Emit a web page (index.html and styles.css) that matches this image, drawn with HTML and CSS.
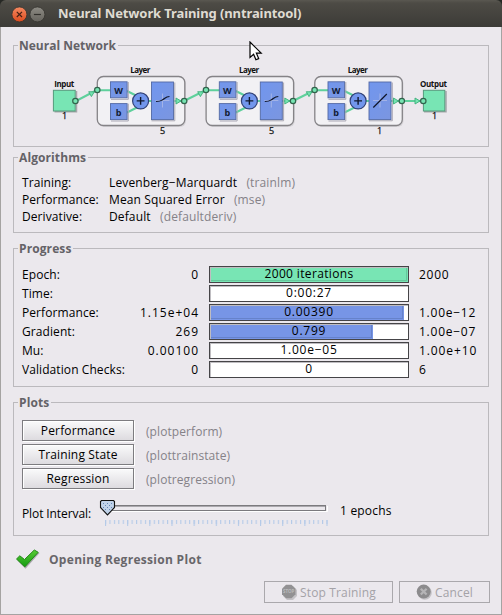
FILE: index.html
```html
<!DOCTYPE html>
<html lang="en">
<head>
<meta charset="utf-8">
<title>Neural Network Training (nntraintool)</title>
<link rel="stylesheet" href="styles.css">
</head>
<body>
<div class="window">
  <header class="titlebar">
    <svg class="controls" width="36" height="20" viewBox="0 0 36 20">
      <defs>
        <linearGradient id="cl" x1="0" y1="0" x2="0" y2="1"><stop offset="0" stop-color="#f58a62"/><stop offset="1" stop-color="#dd4b1e"/></linearGradient>
        <linearGradient id="mn" x1="0" y1="0" x2="0" y2="1"><stop offset="0" stop-color="#8d8b84"/><stop offset="1" stop-color="#66645e"/></linearGradient>
      </defs>
      <circle cx="8.4" cy="10.4" r="7.5" fill="url(#cl)" stroke="#35332f" stroke-width=".8"/>
      <path d="M5.8 7.8l5.2 5.2M11 7.800l-5.200 5.200" stroke="#452015" stroke-width="1.2"/>
      <circle cx="26.4" cy="10.4" r="7.5" fill="url(#mn)" stroke="#35332f" stroke-width=".8"/>
      <path d="M22.9 10.5h7" stroke="#32312d" stroke-width="1.2"/>
    </svg>
    <h1>Neural Network Training (nntraintool)</h1>
  </header>

  <main>
    <fieldset class="group network">
      <legend>Neural Network</legend>
      <svg class="diagram" width="420" height="84" viewBox="40 60 420 84">
        <defs>
          <linearGradient id="bx" x1="0" y1="0" x2="1" y2="1"><stop offset="0" stop-color="#7196ee"/><stop offset="1" stop-color="#7b96e0"/></linearGradient>
          <g id="dot"><circle r="2.7" fill="#76e4b2" stroke="#32634c" stroke-width="1.2"/></g>
          <g id="layer">
            <rect x="98" y="77.500" width="88" height="49.500" rx="6" fill="#d5d3d7"/>
            <rect x="97.300" y="76.500" width="87.500" height="49" rx="6" fill="#f2f1f4" stroke="#858387" stroke-width="1.3"/>
            <path d="M98 90.300h13M127 91l10 5M127 112.500l10-5M148 101h4M173 101h10" stroke="#5fd09c" stroke-width="2" fill="none"/>
            <path d="M176 98l5 3-5 3z" fill="#76e4b2" stroke="#3eaf7a" stroke-width=".9"/>
            <g stroke="#aaa8b3" stroke-width="1">
              <path d="M111 99.300h17.300V82M111 121h17.300v-17.300M151.500 120.800h23.300V82.500" fill="none"/>
            </g>
            <g fill="url(#bx)" stroke="#5369a4" stroke-width=".9">
              <rect x="110.500" y="81.800" width="16.600" height="16"/>
              <rect x="110.500" y="103.600" width="16.600" height="16"/>
              <rect x="151.500" y="82" width="22" height="37.600"/>
            </g>
            <path d="M162.500 93.500v14M155.500 100.500h14" stroke="#a3b3e7" stroke-width="1"/>
            <circle cx="140.600" cy="100.900" r="8" fill="#7296ec" stroke="#314177" stroke-width="1.200"/>
            <path d="M136.700 100.900h7.800M140.600 97v7.800" stroke="#10182e" stroke-width="1.400"/>
            <text class="sym" x="118.600" y="93.600">W</text>
            <text class="sym" x="118.600" y="115.600">b</text>
            <text class="lab" x="140.300" y="73" textLength="20">Layer</text>
          </g>
        </defs>
        <g stroke="#5fd09c" stroke-width="2" fill="none">
          <path d="M76 101l20-10.500M184 101l21-10.500M293 101l21-10.500M402 101h21"/>
        </g>
        <use href="#layer"/><use href="#layer" x="108.800"/><use href="#layer" x="217.500"/>
        <g fill="#76e4b2" stroke="#3eaf7a" stroke-width=".9">
          <path d="M88.700 91.700l5.600.2-2.900 4.700zM197.700 91.700l5.600.2-2.900 4.700zM306.300 91.700l5.600.2-2.900 4.700zM415 98l5 3-5 3z"/>
        </g>
        <path class="curve" d="M156 101.500c5 0 5-.8 7-2s3-3 6.500-3M264.800 101.500c5 0 5-.8 7-2s3-3 6.500-3M373.300 107.500l13.500-13.500"/>
        <path d="M54.500 111.800h22V91M424 111.800h22V91" fill="none" stroke="#a7a5aa" stroke-width="1.500"/>
        <g fill="#78e5b4" stroke="#559b7c"><rect x="53.400" y="90.300" width="21.800" height="20.700"/><rect x="423.400" y="90.300" width="21.400" height="20.700"/></g>
        <use href="#dot" x="75.400" y="101"/><use href="#dot" x="97.300" y="90"/><use href="#dot" x="184.200" y="101"/>
        <use href="#dot" x="206" y="90"/><use href="#dot" x="293" y="101"/><use href="#dot" x="314.600" y="90"/>
        <use href="#dot" x="401.800" y="101"/><use href="#dot" x="423.300" y="101"/>
        <text class="lab" x="64.200" y="87" textLength="20">Input</text>
        <text class="lab" x="433.500" y="87" textLength="27">Output</text>
        <text class="num" x="64.700" y="119">1</text><text class="num" x="434.700" y="119">1</text>
        <text class="num" x="162.700" y="134">5</text><text class="num" x="271.500" y="134">5</text><text class="num" x="379.600" y="134">1</text>
      </svg>
    </fieldset>

    <fieldset class="group algorithms">
      <legend>Algorithms</legend>
      <dl>
        <dt>Training:</dt><dd>Levenberg−Marquardt <span class="fn">(trainlm)</span></dd>
        <dt>Performance:</dt><dd>Mean Squared Error <span class="fn">(mse)</span></dd>
        <dt>Derivative:</dt><dd>Default <span class="fn">(defaultderiv)</span></dd>
      </dl>
    </fieldset>

    <fieldset class="group progress">
      <legend>Progress</legend>
      <div class="row"><span>Epoch:</span><span class="from">0</span><div class="bar"><i class="fill green" style="width:100%"></i><b class="words">2000 iterations</b></div><span class="to">2000</span></div>
      <div class="row"><span>Time:</span><span class="from"></span><div class="bar"><b>0:00:27</b></div><span class="to"></span></div>
      <div class="row"><span>Performance:</span><span class="from">1.15e+04</span><div class="bar"><i class="fill" style="width:97.3%"></i><b>0.00390</b></div><span class="to">1.00e−12</span></div>
      <div class="row"><span>Gradient:</span><span class="from">269</span><div class="bar"><i class="fill" style="width:81.9%"></i><b>0.799</b></div><span class="to">1.00e−07</span></div>
      <div class="row"><span>Mu:</span><span class="from">0.00100</span><div class="bar"><b>1.00e−05</b></div><span class="to plus">1.00e+10</span></div>
      <div class="row"><span>Validation Checks:</span><span class="from">0</span><div class="bar"><b>0</b></div><span class="to">6</span></div>
    </fieldset>

    <fieldset class="group plots">
      <legend>Plots</legend>
      <div class="plot"><button>Performance</button><span class="fn">(plotperform)</span></div>
      <div class="plot"><button>Training State</button><span class="fn">(plottrainstate)</span></div>
      <div class="plot"><button>Regression</button><span class="fn">(plotregression)</span></div>
      <div class="interval">
        <span class="caption">Plot Interval:</span>
        <svg width="232" height="30" viewBox="98 498 232 30">
          <defs>
            <pattern id="minor" x="105" y="520" width="4.430" height="4" patternUnits="userSpaceOnUse"><rect width="1.100" height="4" fill="#b4cae8"/></pattern>
            <pattern id="major" x="105" y="520" width="22.150" height="6" patternUnits="userSpaceOnUse"><rect width="1.100" height="6" fill="#b4cae8"/></pattern>
          </defs>
          <path d="M108 511.500h219.500V506" fill="none" stroke="#fff"/>
          <rect x="107.500" y="505.500" width="218" height="5" fill="#ebe8ed" stroke="#7b7a7e"/>
          <path d="M108 506.500h217" stroke="#aaa8ad"/>
          <rect x="105" y="520" width="223" height="4" fill="url(#minor)"/>
          <rect x="105" y="520" width="223" height="6" fill="url(#major)"/>
          <path d="M101.500 500.500h12l1 1v6l-7 7.500-7-7.500v-6z" fill="#c0d2e9" stroke="#111" stroke-width="1.100"/>
          <path d="M103 503.500h9M103 507.500h9" stroke="#6487b6" stroke-dasharray="1 3"/>
          <path d="M105 505.500h7M105 509.500h5" stroke="#6487b6" stroke-dasharray="1 3"/>
        </svg>
        <span class="value">1 epochs</span>
      </div>
    </fieldset>

    <div class="status">
      <svg width="26" height="22" viewBox="15 548 26 22">
        <defs><linearGradient id="ck" x1="0" y1="0" x2="0" y2="1"><stop offset="0" stop-color="#59cc35"/><stop offset="1" stop-color="#149c12"/></linearGradient></defs>
        <path d="M17.500 560.500l3.500-3 4.500 4 9-10.500 5 2-14 15.800z" fill="#a9a7ab"/>
        <path d="M16.500 559l3.300-3.200 4.700 3.700 9.800-9.500 3.900 2.300-13.400 14.600z" fill="url(#ck)" stroke="#258a1a" stroke-width="1" stroke-linejoin="round"/>
      </svg>
      <strong>Opening Regression Plot</strong>
    </div>

    <div class="actions">
      <button class="stop" disabled>
        <svg width="17" height="17" viewBox="0 0 17 17"><path d="M6 2h6l4 4v6l-4 4H6l-4-4z" fill="#c4c2c6"/><path d="M5 .8h5.500l4 4v5.500l-4 4H5l-4-4V4.800z" fill="#929193"/><text class="stoptext" x="7.700" y="9.300">STOP</text></svg>
        <span>Stop Training</span>
      </button>
      <button class="cancel" disabled>
        <svg width="17" height="17" viewBox="0 0 17 17"><circle cx="8.800" cy="8.800" r="7" fill="#c4c2c6"/><circle cx="7.700" cy="7.600" r="7" fill="#8c8b8d"/><path d="M4.800 4.700l5.800 5.800M10.600 4.700l-5.800 5.800" stroke="#b5b4b6" stroke-width="2.300"/></svg>
        <span>Cancel</span>
      </button>
    </div>
  </main>

  <svg class="pointer" width="14" height="21" viewBox="0 0 14 21"><path d="M1 1v15.500l3.600-3.300 2.300 5.600 2.800-1.200-2.300-5.400h4.800z" fill="#fff" stroke="#000" stroke-width="1.200"/></svg>
</div>
</body>
</html>
```

FILE: styles.css
```css
* { box-sizing: border-box; }
body {
  margin: 0;
  background: #262824;
  color: #000;
  font: 12px/17px "Open Sans", "Noto Sans", sans-serif;
  letter-spacing: .08px;
}
.window { position: relative; width: 502px; height: 615px; }
.titlebar {
  display: flex;
  height: 27px;
  padding: 4px 0 0 11px;
  background: linear-gradient(#5a5851 0, #4d4b45 3px, #3c3b37 100%);
  border-radius: 6px 6px 0 0;
}
.controls { flex: none; }
h1 {
  margin: 1px 0 0 11px;
  color: #dfdbd2;
  font: bold 13px/17px "Noto Sans", sans-serif;
  letter-spacing: -.1px;
  white-space: nowrap;
}
main {
  height: 588px;
  padding: 11px 12px 0;
  background: #ebe8ed;
  border: 1px solid #a5a3a2;
  border-top: 0;
}
.group {
  min-width: 0;
  width: 476px;
  margin: 0 0 8px;
  padding: 0 0 0 8px;
  border: 1px solid #bbb9bd;
}
legend {
  height: 15px;
  margin-left: -4px;
  padding: 0 2px 0 1px;
  color: #646267;
  font-weight: bold;
  line-height: 15px;
  letter-spacing: .1px;
}
.network { height: 109px; margin-bottom: 3px; }
.network legend { letter-spacing: 0; }
.diagram { display: block; margin: 7px 0 0 18px; }
.lab { font: bold 8px "Open Sans", sans-serif; letter-spacing: 0; text-anchor: middle; fill: #111; }
.num { font: 9px "Open Sans", sans-serif; letter-spacing: 0; text-anchor: middle; fill: #111; stroke: #111; stroke-width: .25px; }
.sym { font: bold 9px "Open Sans", sans-serif; letter-spacing: 0; text-anchor: middle; fill: #111b35; }
.curve { fill: none; stroke: #10172b; stroke-width: 1.2; }

.algorithms { height: 83px; }
dl { display: grid; grid-template-columns: 87px 1fr; margin: 9px 0 0; }
dd { margin: 0; letter-spacing: .13px; }
.fn { margin-left: 6px; color: #858288; }

.progress { height: 146px; }
.progress legend { margin-bottom: 10px; }
.row {
  display: grid;
  grid-template-columns: 107px 70px 200px 1fr;
  height: 17px;
  margin-bottom: 2px;
}
.from, .to, .bar { letter-spacing: .75px; }
.from { letter-spacing: 1px; text-align: right; }
.bar {
  position: relative;
  width: 200px;
  margin-left: 10px;
  border: 1px solid #454447;
  background: #fff;
  box-shadow: inset 1px 1px #bfbdc1;
}
.bar b {
  position: absolute;
  inset: 0;
  font-weight: normal;
  line-height: 14px;
  text-align: center;
}
.bar .words { letter-spacing: .35px; }
.fill {
  display: block;
  height: 14px;
  margin-left: 1px;
  margin-top: 1px;
  max-width: 197px;
  background: #7795e6;
  box-shadow: inset -1px -1px #7795e6, inset -2px -2px #6682cb;
}
.green { background: #78e5b4; box-shadow: inset -1px -1px #78e5b4, inset -2px -2px #66c79c; }
.to { margin-left: 20px; }
.plus { letter-spacing: .9px; }

.plots { height: 141px; margin-bottom: 12px; }
.plots legend { margin-bottom: 10px; }
.plot { display: flex; height: 21px; margin-bottom: 3px; line-height: 23px; }
.plot .fn { margin-left: 12px; }
button {
  padding: 0;
  border: 1px solid #7d7c80;
  border-radius: 0;
  color: #000;
  font: inherit;
  letter-spacing: .15px;
}
.plot button {
  width: 112px;
  line-height: 19px;
  background: linear-gradient(#fafafb, #dddbdf);
  box-shadow: inset 1px 1px #fff, 1px 1px #fff;
}
.interval { display: flex; margin-top: 9px; }
.caption { width: 76px; margin-top: 7px; letter-spacing: -.1px; white-space: nowrap; }
.interval svg { flex: none; }
.value { margin: 4px 0 0 10px; letter-spacing: .2px; }

.status { display: flex; height: 22px; margin-left: 2px; }
.status strong { margin: 3px 0 0 8px; color: #68666a; letter-spacing: .3px; }
.actions { display: flex; justify-content: flex-end; gap: 6px; width: 477px; margin-top: 11px; }
.actions button {
  display: flex;
  align-items: center;
  height: 22px;
  background: #ebe8ed;
  border-color: #aaa8ac;
  color: #a4a2a7;
}
.actions svg { margin: 0 2px 0 16px; }
.stop { width: 129px; }
.cancel { width: 91px; }
.stoptext { font: bold 4.5px "Open Sans", sans-serif; letter-spacing: 0; text-anchor: middle; fill: #bbb; }
.pointer { position: absolute; left: 249px; top: 41px; }
```
